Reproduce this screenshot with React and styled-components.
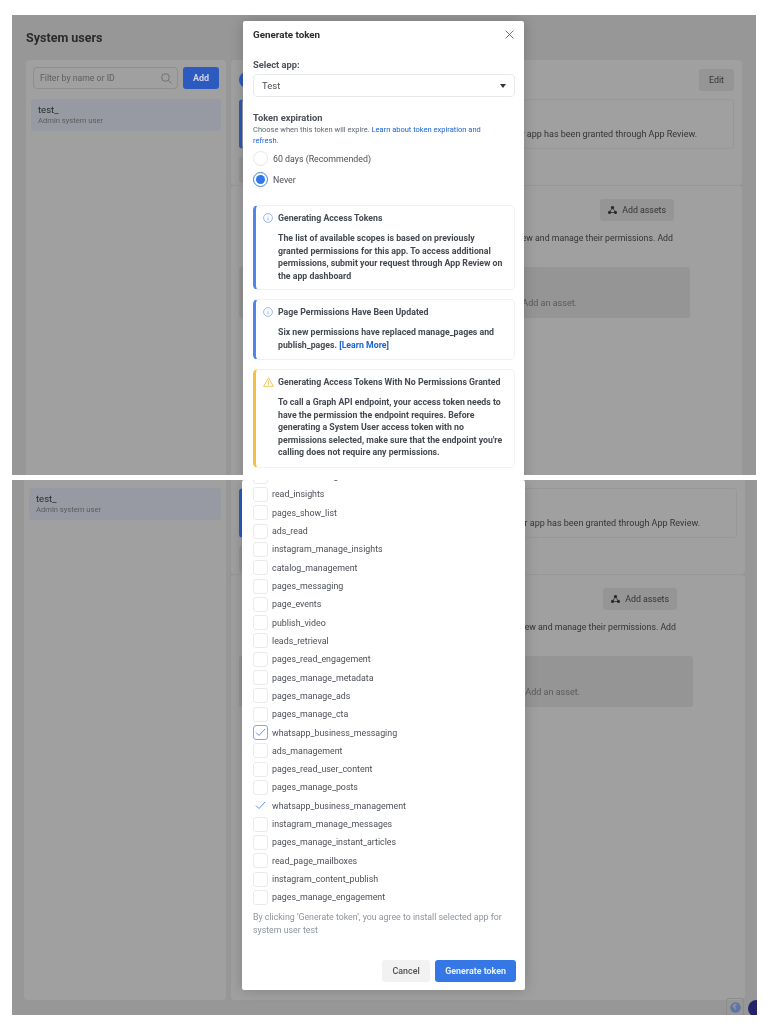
import React from 'react'
import styled, { createGlobalStyle } from 'styled-components'

const GlobalStyle = createGlobalStyle`
  html, body { margin: 0; padding: 0; background: #fff; }
  body { font-family: Roboto, "Liberation Sans", sans-serif; }
  svg { display: block; }
`
const Page = styled.div`
  width: 767px;
  height: 1024px;
  display: flex;
  flex-direction: column;
  gap: 5px;
  padding: 15px 0 0 12px;
  box-sizing: border-box;
  overflow: hidden;
  filter: blur(0.35px);
`
const Shot = styled.div`
  position: relative;
  width: ${p => p.$width}px;
  height: ${p => p.$height}px;
  background: #979797;
  overflow: hidden;
  flex: none;
`
const Scroller = styled.div`
  margin-top: -${p => p.$scroll}px;
  padding-left: ${p => p.$left}px;
  box-sizing: border-box;
`
const Heading = styled.h1`
  margin: 0;
  height: 45px;
  padding-top: 13px;
  box-sizing: border-box;
  font-size: 12.5px;
  font-weight: 700;
  line-height: 19px;
  color: #2a2a2a;
`
const Columns = styled.div`
  display: flex;
  gap: 5px;
`
const Sidebar = styled.div`
  width: ${p => p.$width}px;
  height: 551px;
  flex: none;
  box-sizing: border-box;
  background: #a0a0a0;
  border-radius: 4px;
  padding: 7px 5px 0;
`
const SearchRow = styled.div`
  display: flex;
  gap: 5px;
  height: 22px;
  padding: 0 2px;
  margin-bottom: 10px;
`
const SearchBox = styled.div`
  flex: 1;
  height: 22px;
  box-sizing: border-box;
  border: 1px solid #8e8e8e;
  border-radius: 4px;
  display: flex;
  align-items: center;
  justify-content: space-between;
  padding: 0 5px 0 6px;
  font-size: 8.7px;
  color: #5e5e5e;
`
const AddButton = styled.div`
  width: 36px;
  height: 22px;
  border-radius: 3px;
  background: #2c5abf;
  color: #c9d3e6;
  font-size: 9px;
  font-weight: 700;
  display: flex;
  align-items: center;
  justify-content: center;
`
const UserRow = styled.div`
  height: 32px;
  box-sizing: border-box;
  background: #979aa3;
  border-radius: 3px;
  padding: 5px 7px;
`
const UserName = styled.div`
  font-size: 9.5px;
  line-height: 12px;
  color: #2b2b2b;
`
const UserRole = styled.div`
  font-size: 7.6px;
  line-height: 9px;
  color: #5c5c5c;
`
const Main = styled.div`
  width: ${p => p.$width}px;
  flex: none;
`
const Section = styled.div`
  background: #a0a0a0;
  border-radius: 4px;
  box-sizing: border-box;
  height: ${p => p.$height}px;
  padding: ${p => p.$pad};
  margin-bottom: 1px;
`
const TopRow = styled.div`
  display: flex;
  align-items: center;
  justify-content: space-between;
  height: 22px;
  margin-bottom: 8px;
`
const Avatar = styled.div`
  width: 16px;
  height: 16px;
  border-radius: 50%;
  background: #2c5abf;
`
const GreyButton = styled.div`
  height: 22px;
  padding: 0 ${p => p.$pad}px;
  display: flex;
  align-items: center;
  gap: 5px;
  border-radius: 3px;
  background: #959595;
  font-size: 8.8px;
  color: #333;
`
const NoticeBox = styled.div`
  height: 50px;
  box-sizing: border-box;
  border: 1px solid #989898;
  border-left: 3px solid #2c5abf;
  border-radius: 4px;
  display: flex;
  align-items: flex-end;
  justify-content: flex-end;
  padding: 0 36px 8px 0;
  font-size: 9px;
  line-height: 12px;
  color: #333;
`
const GhostBlock = styled.div`
  width: 20px;
  height: 26px;
  margin-top: 8px;
  background: #959595;
  border-radius: 3px;
`
const AssetsRow = styled.div`
  display: flex;
  justify-content: flex-end;
  padding-right: 16px;
  margin-bottom: 11px;
`
const AssetsText = styled.div`
  text-align: right;
  padding-right: 17px;
  height: 35px;
  font-size: 8.75px;
  line-height: 12px;
  color: #333;
`
const AssetBox = styled.div`
  height: 51px;
  box-sizing: border-box;
  background: #959595;
  border-radius: 3px;
  display: flex;
  align-items: flex-end;
  justify-content: flex-end;
  padding: 0 113px 10px 0;
  font-size: 9px;
  color: #5a5a5a;
`
const Modal = styled.div`
  position: absolute;
  left: ${p => p.$left}px;
  top: ${p => p.$top}px;
  width: ${p => p.$width}px;
  height: ${p => p.$height}px;
  box-sizing: border-box;
  background: #fff;
  border-radius: 2px;
  box-shadow: 0 0 14px rgba(0, 0, 0, 0.2);
  overflow: hidden;
  display: flex;
  flex-direction: column;
  padding: ${p => p.$pad};
`
const ModalHead = styled.div`
  display: flex;
  align-items: center;
  justify-content: space-between;
  height: 14px;
  margin: 6px 0 18px;
  font-size: 9.8px;
  font-weight: 700;
  color: #2a2c30;
`
const CloseSlot = styled.span`
  margin-right: 10px;
`
const Label = styled.div`
  font-size: 9.3px;
  font-weight: 700;
  line-height: 12px;
  color: #4b4f56;
`
const SelectBox = styled.div`
  height: 23px;
  margin: 3px 9px 15px 0;
  box-sizing: border-box;
  border: 1px solid #e6e8ea;
  border-radius: 4px;
  display: flex;
  align-items: center;
  justify-content: space-between;
  padding: 0 8px;
  font-size: 9.5px;
  color: #4b4f56;
  &::after {
    content: '';
    border-left: 3.5px solid transparent;
    border-right: 3.5px solid transparent;
    border-top: 4px solid #333;
  }
`
const Hint = styled.div`
  font-size: 7.5px;
  line-height: 11px;
  color: #606770;
  margin-bottom: 5px;
  padding-right: 30px;
  a { color: #1a62d6; text-decoration: none; }
`
const RadioRow = styled.div`
  display: flex;
  align-items: center;
  gap: 5px;
  height: 15px;
  margin-bottom: 6px;
  font-size: 8.8px;
  color: #4b4f56;
`
const Radio = styled.span`
  width: 15px;
  height: 15px;
  flex: none;
  box-sizing: border-box;
  border-radius: 50%;
  border: 1px solid ${p => (p.$on ? '#3b82e8' : '#e4e6e8')};
  display: flex;
  align-items: center;
  justify-content: center;
  &::after {
    content: '';
    width: 9px;
    height: 9px;
    border-radius: 50%;
    background: ${p => (p.$on ? '#2f78e6' : 'transparent')};
  }
`
const Cards = styled.div`
  display: flex;
  flex-direction: column;
  gap: 9px;
  margin: 12px 9px 0 0;
`
const Card = styled.div`
  display: flex;
  gap: 5px;
  height: ${p => p.$height}px;
  box-sizing: border-box;
  padding: 7px 9px 0 7px;
  border: 1px solid #f0f1f2;
  border-left: 3px solid ${p => p.$accent};
  border-radius: 5px;
`
const CardIcon = styled.div`
  width: 10px;
  flex: none;
`
const CardTitle = styled.div`
  font-size: 8.75px;
  font-weight: 700;
  line-height: 11px;
  color: #444950;
  margin-bottom: 8px;
  white-space: nowrap;
`
const CardBody = styled.div`
  font-size: 8.75px;
  font-weight: 700;
  line-height: 12.5px;
  color: #444950;
  a { color: #1a62d6; text-decoration: none; }
`
const PermList = styled.div`
  margin-top: -13px;
`
const PermRow = styled.div`
  height: 18.32px;
  display: flex;
  align-items: center;
  gap: 4px;
  font-size: 8.85px;
  color: #4b4f56;
`
const Check = styled.span`
  width: 15px;
  height: 15px;
  flex: none;
  box-sizing: border-box;
  border-radius: 3px;
  border: ${p => (p.$focus ? '1.5px solid #7ea9f0' : `1px solid ${p.$on ? '#fff' : '#e8eaec'}`)};
  display: flex;
  align-items: center;
  justify-content: center;
`
const Terms = styled.div`
  margin-top: 4px;
  font-size: 8.8px;
  line-height: 13px;
  color: #8d949e;
`
const Footer = styled.div`
  margin-top: auto;
  display: flex;
  justify-content: flex-end;
  gap: 5px;
`
const FootButton = styled.div`
  height: 22px;
  padding: 0 ${p => (p.$primary ? 10 : 10.5)}px;
  border-radius: 3px;
  display: flex;
  align-items: center;
  font-size: 8.9px;
  font-weight: ${p => (p.$primary ? 700 : 500)};
  background: ${p => (p.$primary ? '#3578e5' : '#f2f2f2')};
  color: ${p => (p.$primary ? '#e8effb' : '#4b4f56')};
`
const GlobeTab = styled.div`
  position: absolute;
  right: 13px;
  bottom: 0;
  width: 18px;
  height: 17px;
  box-sizing: border-box;
  border: 1px solid #8c8c8c;
  border-bottom: none;
  border-radius: 3px 3px 0 0;
  display: flex;
  align-items: center;
  justify-content: center;
`
const ChatBubble = styled.div`
  position: absolute;
  right: -8px;
  bottom: -2px;
  width: 17px;
  height: 17px;
  border-radius: 50%;
  background: #24246a;
`

const InfoIcon = () => (
  <svg width="10" height="10" viewBox="0 0 10 10" fill="none" stroke="#7ea6ee" strokeWidth="0.8">
    <circle cx="5" cy="5" r="4.4" />
    <path d="M5 4.4v3M5 2.5v0.9" />
  </svg>
)
const WarnIcon = () => (
  <svg width="11" height="10" viewBox="0 0 11 10" fill="none" stroke="#f2c04f" strokeWidth="0.9">
    <path d="M5.5 0.8L10.4 9.3H0.6Z" strokeLinejoin="round" />
    <path d="M5.5 3.6v3M5.5 7.2v0.8" />
  </svg>
)
const CloseIcon = () => (
  <svg width="9" height="9" viewBox="0 0 9 9" stroke="#666" strokeWidth="0.9">
    <path d="M0.5 0.5l8 8M8.5 0.5l-8 8" />
  </svg>
)
const SearchIcon = () => (
  <svg width="11" height="11" viewBox="0 0 11 11" fill="none" stroke="#666" strokeWidth="0.8">
    <circle cx="4.5" cy="4.5" r="3.8" />
    <path d="M7.3 7.3l3.2 3.2" />
  </svg>
)
const AssetsIcon = () => (
  <svg width="9" height="8" viewBox="0 0 9 8" fill="#222" stroke="#222" strokeWidth="0.7">
    <path d="M4.5 1.5L1.5 6.5h6Z" fill="none" />
    <circle cx="4.5" cy="1.5" r="1.2" />
    <circle cx="1.5" cy="6.5" r="1.2" />
    <circle cx="7.5" cy="6.5" r="1.2" />
  </svg>
)
const CheckMark = () => (
  <svg width="11" height="9" viewBox="0 0 11 9" fill="none" stroke="#5f92e8" strokeWidth="1">
    <path d="M1 4.5l3 3L10 1" />
  </svg>
)
const GlobeIcon = () => (
  <svg width="11" height="11" viewBox="0 0 11 11">
    <circle cx="5.5" cy="5.5" r="5.2" fill="#5c74a8" />
    <path d="M3 2.2l3-.6 1 1.6-2 1.2 1.4 1.6-1 2.4-1.2-2.2L2.4 5Z" fill="#8d8d9b" />
  </svg>
)

const permissions = [
  'business_management', 'read_insights', 'pages_show_list', 'ads_read',
  'instagram_manage_insights', 'catalog_management', 'pages_messaging',
  'page_events', 'publish_video', 'leads_retrieval', 'pages_read_engagement',
  'pages_manage_metadata', 'pages_manage_ads', 'pages_manage_cta',
  'whatsapp_business_messaging', 'ads_management', 'pages_read_user_content',
  'pages_manage_posts', 'whatsapp_business_management',
  'instagram_manage_messages', 'pages_manage_instant_articles',
  'read_page_mailboxes', 'instagram_content_publish', 'pages_manage_engagement',
]

// the lower shot is the same page scrolled down, so its top parts are left empty
const Backdrop = ({ scroll, left, sidebar, main }) => {
  const atTop = scroll === 0
  return (
    <Scroller $scroll={scroll} $left={left}>
      <Heading>{atTop && 'System users'}</Heading>
      <Columns>
        <Sidebar $width={sidebar}>
          <SearchRow>
            {atTop && <SearchBox>Filter by name or ID<SearchIcon /></SearchBox>}
            {atTop && <AddButton>Add</AddButton>}
          </SearchRow>
          <UserRow>
            <UserName>test_</UserName>
            <UserRole>Admin system user</UserRole>
          </UserRow>
        </Sidebar>
        <Main $width={main}>
          <Section $height={125} $pad="9px 8px 0">
            <TopRow>
              {atTop && <Avatar />}
              {atTop && <GreyButton $pad={10}>Edit</GreyButton>}
            </TopRow>
            <NoticeBox>ir app has been granted through App Review.</NoticeBox>
            <GhostBlock />
          </Section>
          <Section $height={425} $pad="13px 52px 0 8px">
            <AssetsRow>
              <GreyButton $pad={8}><AssetsIcon />Add assets</GreyButton>
            </AssetsRow>
            <AssetsText>ew and manage their permissions. Add</AssetsText>
            <AssetBox>Add an asset.</AssetBox>
          </Section>
        </Main>
      </Columns>
    </Scroller>
  )
}

const App = () => (
  <Page>
    <GlobalStyle />
    <Shot $width={744} $height={460}>
      <Backdrop scroll={0} left={14} sidebar={200} main={511} />
      <Modal $left={231} $top={6} $width={281} $height={480} $pad="0 0 0 10px">
        <ModalHead>
          Generate token
          <CloseSlot><CloseIcon /></CloseSlot>
        </ModalHead>
        <Label>Select app:</Label>
        <SelectBox>Test</SelectBox>
        <Label>Token expiration</Label>
        <Hint>
          Choose when this token will expire. <a href="#learn">Learn about token expiration and refresh.</a>
        </Hint>
        <RadioRow><Radio />60 days (Recommended)</RadioRow>
        <RadioRow><Radio $on />Never</RadioRow>
        <Cards>
          <Card $accent="#4f86ec" $height={85}>
            <CardIcon><InfoIcon /></CardIcon>
            <div>
              <CardTitle>Generating Access Tokens</CardTitle>
              <CardBody>
                The list of available scopes is based on previously granted permissions for this app. To access additional permissions, submit your request through App Review on the app dashboard
              </CardBody>
            </div>
          </Card>
          <Card $accent="#4f86ec" $height={61}>
            <CardIcon><InfoIcon /></CardIcon>
            <div>
              <CardTitle>Page Permissions Have Been Updated</CardTitle>
              <CardBody>
                Six new permissions have replaced manage_pages and publish_pages. <a href="#more">[Learn More]</a>
              </CardBody>
            </div>
          </Card>
          <Card $accent="#f5bf42" $height={99}>
            <CardIcon><WarnIcon /></CardIcon>
            <div>
              <CardTitle>Generating Access Tokens With No Permissions Granted</CardTitle>
              <CardBody>
                To call a Graph API endpoint, your access token needs to have the permission the endpoint requires. Before generating a System User access token with no permissions selected, make sure that the endpoint you're calling does not require any permissions.
              </CardBody>
            </div>
          </Card>
        </Cards>
      </Modal>
    </Shot>
    <Shot $width={745} $height={535}>
      <Backdrop scroll={76} left={12} sidebar={202} main={514} />
      <Modal $left={230} $top={0} $width={283} $height={510} $pad="0 9px 8px 11px">
        <PermList>
          {permissions.map(name => (
            <PermRow key={name}>
              <Check
                $on={name === 'whatsapp_business_management'}
                $focus={name === 'whatsapp_business_messaging'}
              >
                {name.startsWith('whatsapp') && <CheckMark />}
              </Check>
              {name}
            </PermRow>
          ))}
        </PermList>
        <Terms>By clicking 'Generate token', you agree to install selected app for system user test</Terms>
        <Footer>
          <FootButton>Cancel</FootButton>
          <FootButton $primary>Generate token</FootButton>
        </Footer>
      </Modal>
      <GlobeTab><GlobeIcon /></GlobeTab>
      <ChatBubble />
    </Shot>
  </Page>
)

export default App
